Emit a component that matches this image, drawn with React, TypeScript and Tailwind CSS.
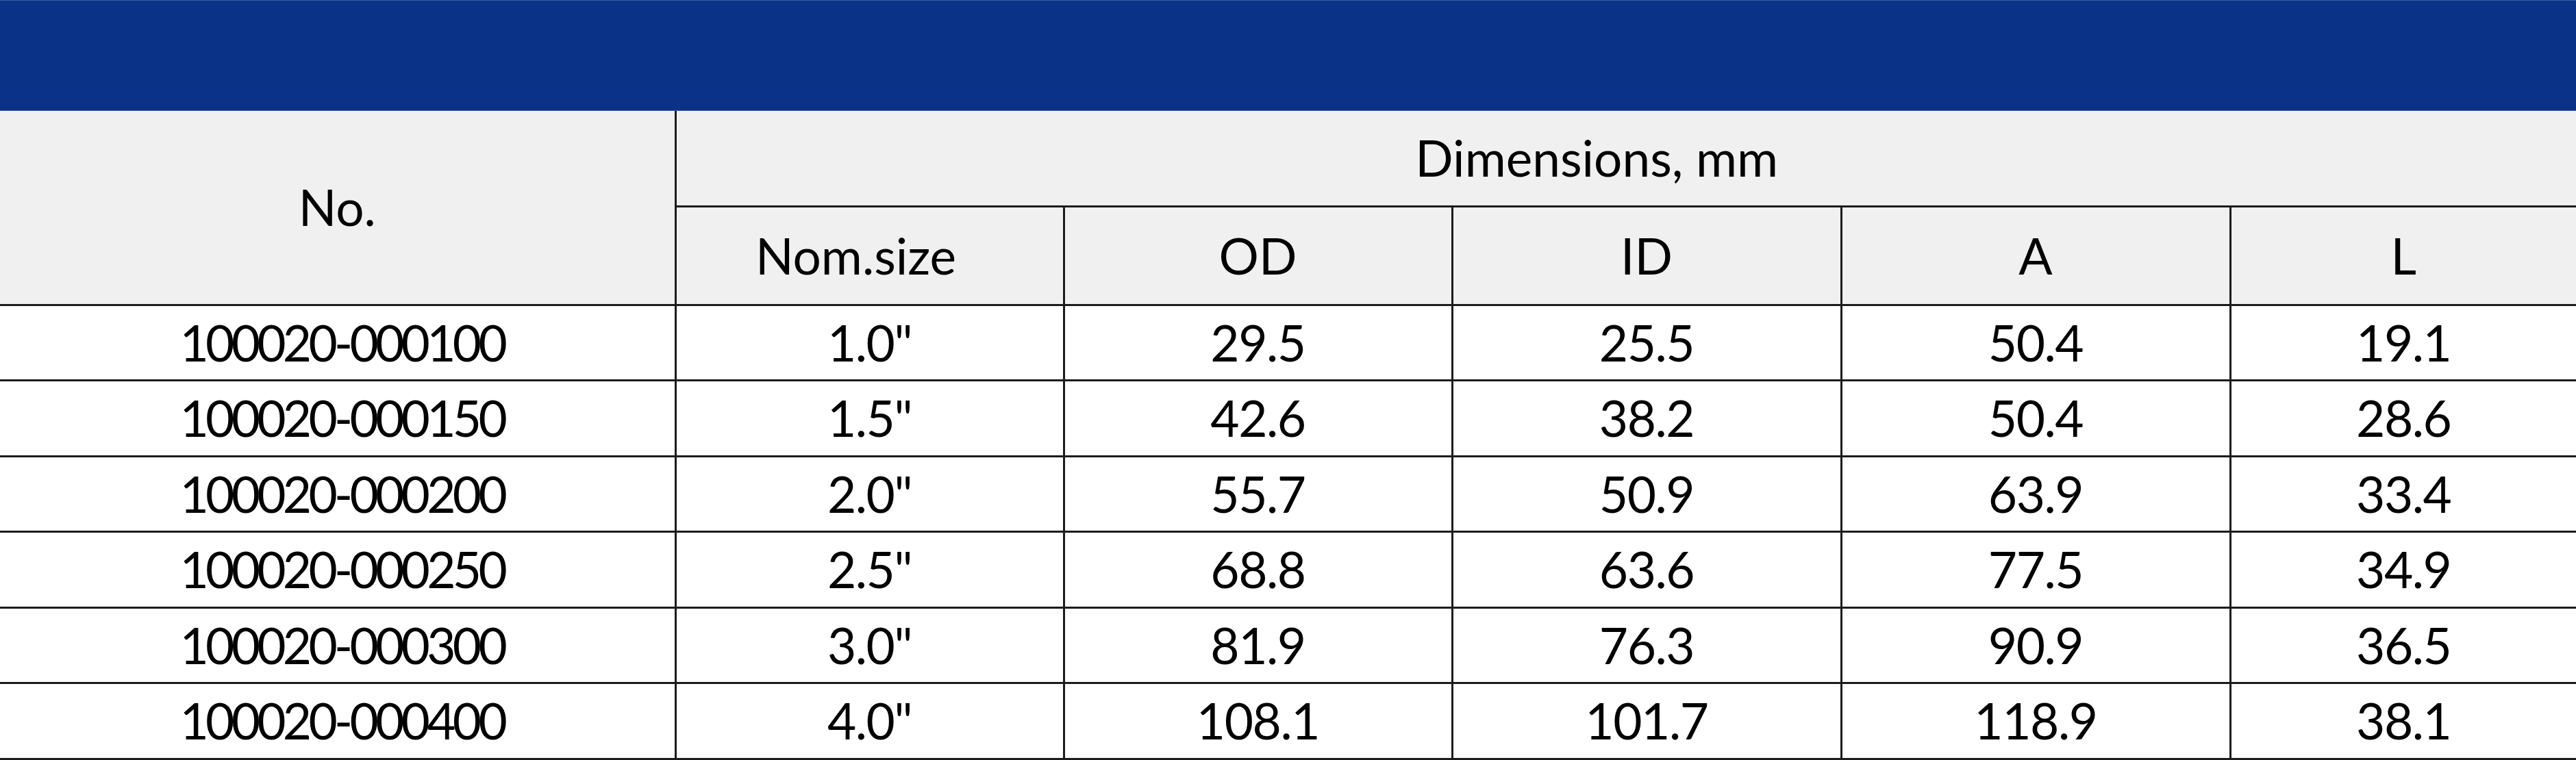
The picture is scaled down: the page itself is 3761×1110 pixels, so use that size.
const rows = [
  ["100020-000100", '1.0"', "29.5", "25.5", "50.4", "19.1"],
  ["100020-000150", '1.5"', "42.6", "38.2", "50.4", "28.6"],
  ["100020-000200", '2.0"', "55.7", "50.9", "63.9", "33.4"],
  ["100020-000250", '2.5"', "68.8", "63.6", "77.5", "34.9"],
  ["100020-000300", '3.0"', "81.9", "76.3", "90.9", "36.5"],
  ["100020-000400", '4.0"', "108.1", "101.7", "118.9", "38.1"],
];

const subHeads = ["Nom.size", "OD", "ID", "A", "L"];

const App = () => {
  return (
    <div className="w-[3761px] h-[1110px] bg-white overflow-hidden text-black font-['Lato','Open_Sans',sans-serif]">
      {/* Title band */}
      <div className="h-[162px] bg-[#0a3388] border-t border-b border-[#3d5da2]" />

      <table className="w-full table-fixed border-collapse text-[73px] leading-none">
        <colgroup>
          <col className="w-[986px]" />
          <col className="w-[567px]" />
          <col className="w-[567px]" />
          <col className="w-[568px]" />
          <col className="w-[568px]" />
          <col className="w-[505px]" />
        </colgroup>
        <thead className="bg-[#f0f0f0]">
          <tr className="h-[139px]">
            <th
              rowSpan={2}
              className="font-normal text-center align-middle border-r-[3px] border-b-[3px] border-[#1c1c1c]"
            >
              No.
            </th>
            <th
              colSpan={5}
              className="font-normal text-center align-middle pr-[86px] border-b-[3px] border-[#1c1c1c]"
            >
              Dimensions, mm
            </th>
          </tr>
          <tr className="h-[144px]">
            {subHeads.map((h, i) => (
              <th
                key={h}
                className={`font-normal text-center align-middle border-b-[3px] border-[#1c1c1c] ${
                  i === 0 ? "pr-[40px]" : ""
                } ${i < subHeads.length - 1 ? "border-r-[3px]" : ""}`}
              >
                {h}
              </th>
            ))}
          </tr>
        </thead>
        <tbody>
          {rows.map((r) => (
            <tr key={r[0]} className="h-[110.5px]">
              {r.map((c, i) => (
                <td
                  key={i}
                  className={`text-center align-middle border-b-[3px] border-[#1c1c1c] ${
                    i === 0 ? "tracking-[-0.065em] pl-[14px]" : "tracking-[-0.02em]"
                  } ${i < r.length - 1 ? "border-r-[3px]" : ""}`}
                >
                  {c}
                </td>
              ))}
            </tr>
          ))}
        </tbody>
      </table>
    </div>
  );
};

export default App;
